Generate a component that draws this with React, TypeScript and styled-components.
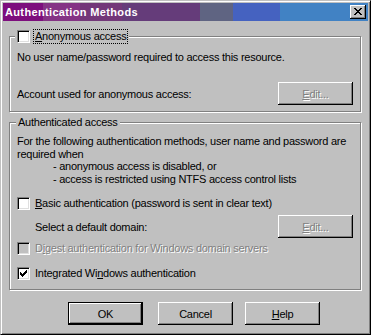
import React from "react";
import styled, { createGlobalStyle, css } from "styled-components";

const GlobalStyle = createGlobalStyle`
  html, body { margin: 0; padding: 0; background: #c0c0c0; }
  body {
    font-family: "Liberation Sans", Arial, sans-serif;
    font-size: 11px;
    letter-spacing: -0.25px;
    color: #000;
    -webkit-font-smoothing: none;
  }
  * { box-sizing: border-box; }
`;

const Window = styled.div`
  width: 371px;
  height: 335px;
  background: #c0c0c0;
  border: 1px solid;
  border-color: #c0c0c0 #000 #000 #c0c0c0;
  box-shadow: inset 1px 1px #fff, inset -1px -1px #808080;
  padding: 2px;
  display: flex;
  flex-direction: column;
`;

const TitleBar = styled.div`
  height: 18px;
  display: flex;
  align-items: center;
  justify-content: space-between;
  padding: 0 2px 0 2px;
  color: #fff;
  font-weight: bold;
  font-size: 11px;
  letter-spacing: 0.35px;
  background: linear-gradient(
    to right,
    #7d0e7d 0px, #7d0e7d 40px,
    #853385 40px, #853385 77px,
    #733779 77px, #733779 119px,
    #653c7a 119px, #653c7a 197px,
    #5f6482 197px, #5f6482 230px,
    #4562c0 230px, #4562c0 277px,
    #4182c4 277px
  );
`;

const TitleText = styled.span`
  white-space: nowrap;
`;

const raised = css`
  background: #c0c0c0;
  border: none;
  box-shadow: inset -1px -1px #000, inset 1px 1px #fff, inset -2px -2px #808080;
`;

const CloseButton = styled.div`
  ${raised};
  width: 16px;
  height: 14px;
  display: flex;
  align-items: center;
  justify-content: center;
  padding: 0 1px 1px 0;
`;

const Body = styled.div`
  display: flex;
  flex-direction: column;
  padding: 0 7px 0 6px;
`;

const GroupBox = styled.div<{ $mt: number; $pt: number; $pb: number }>`
  position: relative;
  margin-top: ${(p) => p.$mt}px;
  padding: ${(p) => p.$pt}px 7px ${(p) => p.$pb}px 7px;
  border: 1px solid #808080;
  box-shadow: inset 1px 1px #fff, 1px 1px #fff;
  display: flex;
  flex-direction: column;
`;

const Legend = styled.div<{ $left: number }>`
  position: absolute;
  top: -8px;
  left: ${(p) => p.$left}px;
  height: 15px;
  padding: 0 2px;
  background: #c0c0c0;
  display: flex;
  align-items: center;
  white-space: nowrap;
  line-height: 13px;
`;

const FocusLabel = styled.span`
  margin-left: 4px;
  padding: 0 1px;
  line-height: 13px;
  outline: 1px dotted #000;
`;

const Text = styled.div<{ $indent?: number }>`
  line-height: 13px;
  white-space: nowrap;
  padding-left: ${(p) => p.$indent ?? 0}px;
`;

const Paragraph = styled.div`
  line-height: 12.5px;
  white-space: nowrap;
`;

const Line = styled.div<{ $indent?: number }>`
  padding-left: ${(p) => p.$indent ?? 0}px;
`;

const Row = styled.div<{ $mt: number; $indent?: number }>`
  margin-top: ${(p) => p.$mt}px;
  padding-left: ${(p) => p.$indent ?? 0}px;
  display: flex;
  align-items: center;
  justify-content: space-between;
  white-space: nowrap;
`;

const CheckRow = styled.div<{ $mt: number }>`
  margin-top: ${(p) => p.$mt}px;
  height: 13px;
  display: flex;
  align-items: center;
  white-space: nowrap;
`;

const CheckBox = styled.span<{ $disabled?: boolean }>`
  flex: none;
  width: 13px;
  height: 13px;
  display: inline-flex;
  align-items: center;
  justify-content: center;
  background: ${(p) => (p.$disabled ? "#c0c0c0" : "#fff")};
  border: 1px solid;
  border-color: #808080 #fff #fff #808080;
  box-shadow: inset 1px 1px #000, inset -1px -1px #dfdfdf;
`;

const CheckLabel = styled.span<{ $disabled?: boolean }>`
  margin-left: 5px;
  line-height: 13px;
  ${(p) =>
    p.$disabled &&
    css`
      color: #808080;
      text-shadow: 1px 1px #fff;
    `}
`;

const Button = styled.button<{ $disabled?: boolean }>`
  ${raised};
  flex: none;
  width: 75px;
  height: 23px;
  padding: 0;
  font-family: inherit;
  font-size: 11px;
  letter-spacing: inherit;
  color: ${(p) => (p.$disabled ? "#808080" : "#000")};
  text-shadow: ${(p) => (p.$disabled ? "1px 1px #fff" : "none")};
  display: flex;
  align-items: center;
  justify-content: center;
`;

const DefaultButton = styled(Button)`
  box-shadow: inset 0 0 0 1px #000, inset -2px -2px #000, inset 2px 2px #fff,
    inset -3px -3px #808080;
  margin-right: 3px;
`;

const ButtonRow = styled.div`
  margin-top: 12px;
  padding-left: 59px;
  display: flex;
  gap: 12px;
`;

const CloseGlyph = () => (
  <svg width="8" height="7" viewBox="0 0 8 7" shapeRendering="crispEdges">
    <path
      fill="#000"
      d="M0 0h2v1H0zM6 0h2v1H6zM1 1h2v1H1zM5 1h2v1H5zM2 2h4v1H2zM3 3h2v1H3zM2 4h4v1H2zM1 5h2v1H1zM5 5h2v1H5zM0 6h2v1H0zM6 6h2v1H6z"
    />
  </svg>
);

const CheckGlyph = () => (
  <svg width="7" height="7" viewBox="0 0 7 7" shapeRendering="crispEdges">
    <path
      fill="#000"
      d="M6 0h1v3H6zM5 1h1v3H5zM4 2h1v3H4zM3 3h1v3H3zM2 4h1v3H2zM1 3h1v3H1zM0 2h1v3H0z"
    />
  </svg>
);

export default function App() {
  return (
    <>
      <GlobalStyle />
      <Window>
        <TitleBar>
          <TitleText>Authentication Methods</TitleText>
          <CloseButton>
            <CloseGlyph />
          </CloseButton>
        </TitleBar>
        <Body>
          <GroupBox $mt={15} $pt={14} $pb={6}>
            <Legend $left={5}>
              <CheckBox />
              <FocusLabel>
                <u>A</u>nonymous access
              </FocusLabel>
            </Legend>
            <Text>No user name/password required to access this resource.</Text>
            <Row $mt={18}>
              <span>Account used for anonymous access:</span>
              <Button $disabled>
                <u>E</u>dit...
              </Button>
            </Row>
          </GroupBox>

          <GroupBox $mt={10} $pt={12} $pb={9}>
            <Legend $left={6}>Authenticated access</Legend>
            <Paragraph>
              <Line>For the following authentication methods, user name and password are</Line>
              <Line>required when</Line>
              <Line $indent={36}>- anonymous access is disabled, or</Line>
              <Line $indent={36}>- access is restricted using NTFS access control lists</Line>
            </Paragraph>
            <CheckRow $mt={12}>
              <CheckBox />
              <CheckLabel>
                <u>B</u>asic authentication (password is sent in clear text)
              </CheckLabel>
            </CheckRow>
            <Row $mt={5} $indent={18}>
              <span>Select a default domain:</span>
              <Button $disabled>
                <u>E</u>dit...
              </Button>
            </Row>
            <CheckRow $mt={4}>
              <CheckBox $disabled />
              <CheckLabel $disabled>
                D<u>i</u>gest authentication for Windows domain servers
              </CheckLabel>
            </CheckRow>
            <CheckRow $mt={12}>
              <CheckBox>
                <CheckGlyph />
              </CheckBox>
              <CheckLabel>
                Integrated Wi<u>n</u>dows authentication
              </CheckLabel>
            </CheckRow>
          </GroupBox>

          <ButtonRow>
            <DefaultButton>OK</DefaultButton>
            <Button>Cancel</Button>
            <Button>
              <u>H</u>elp
            </Button>
          </ButtonRow>
        </Body>
      </Window>
    </>
  );
}
